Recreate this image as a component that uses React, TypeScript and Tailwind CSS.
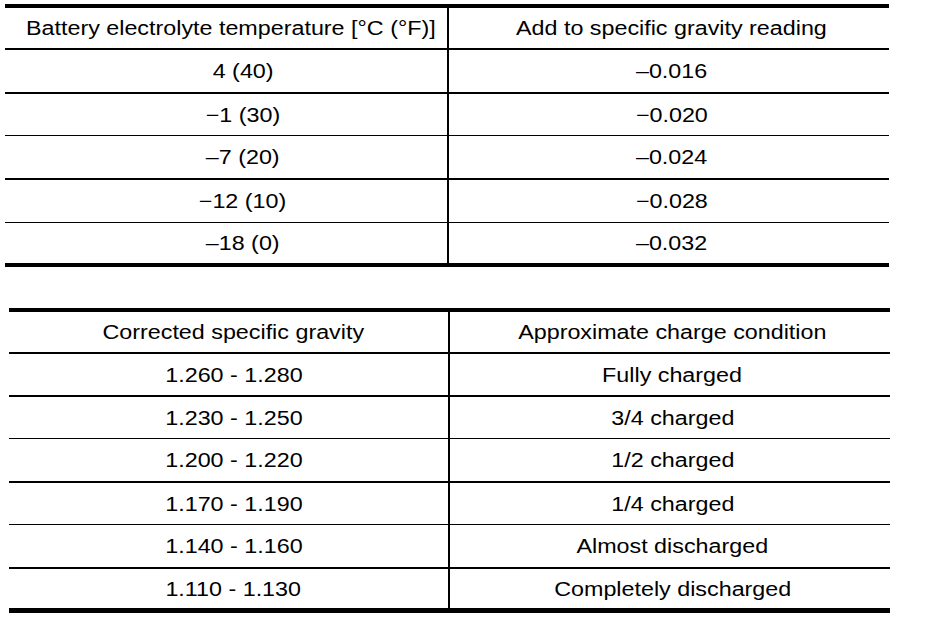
const FONT = "font-['Liberation_Sans',Arial,sans-serif]";

type Row = { left: string; right: string; h: number; line: number };

const tempRows: Row[] = [
  { left: "4 (40)", right: "–0.016", h: 42, line: 2 },
  { left: "−1 (30)", right: "−0.020", h: 41, line: 1 },
  { left: "–7 (20)", right: "–0.024", h: 42, line: 2 },
  { left: "−12 (10)", right: "−0.028", h: 42, line: 1 },
  { left: "–18 (0)", right: "–0.032", h: 40, line: 0 },
];

const gravityRows: Row[] = [
  { left: "1.260 - 1.280", right: "Fully charged", h: 41, line: 2 },
  { left: "1.230 - 1.250", right: "3/4 charged", h: 41, line: 1 },
  { left: "1.200 - 1.220", right: "1/2 charged", h: 42, line: 2 },
  { left: "1.170 - 1.190", right: "1/4 charged", h: 41, line: 1 },
  { left: "1.140 - 1.160", right: "Almost discharged", h: 42, line: 2 },
  { left: "1.110 - 1.130", right: "Completely discharged", h: 39, line: 0 },
];

// the scan is stretched sideways, so glyphs get widened a bit
function Txt({ children }: { children: string }) {
  return <span className="inline-block scale-x-[1.165] whitespace-nowrap">{children}</span>;
}

function Table({
  head,
  rows,
  leftW,
  leftPad,
  headPad,
}: {
  head: [string, string];
  rows: Row[];
  leftW: number;
  leftPad: number;
  headPad: number;
}) {
  return (
    <div className="flex flex-col">
      <div className="flex h-[42px] border-b-2 border-black">
        <div
          className="flex h-[40px] items-center justify-center border-r-2 border-black"
          style={{ width: leftW + 2, paddingLeft: headPad }}
        >
          <Txt>{head[0]}</Txt>
        </div>
        <div className="flex h-[40px] flex-1 items-center justify-center pl-[5px]">
          <Txt>{head[1]}</Txt>
        </div>
      </div>
      {rows.map((r) => (
        <div
          key={r.left}
          className="flex border-black"
          style={{ height: r.h + r.line, borderBottomWidth: r.line }}
        >
          <div
            className="flex items-center justify-center border-r-2 border-black"
            style={{ width: leftW + 2, height: r.h, paddingLeft: leftPad }}
          >
            <Txt>{r.left}</Txt>
          </div>
          <div className="flex flex-1 items-center justify-center pl-[5px]" style={{ height: r.h }}>
            <Txt>{r.right}</Txt>
          </div>
        </div>
      ))}
    </div>
  );
}

export default function App() {
  return (
    <div className={`h-[622px] w-[928px] overflow-hidden bg-white pt-[4px] text-[20px] leading-none text-black ${FONT}`}>
      <div className="ml-[5px] w-[884px] border-y-4 border-black">
        <Table
          head={["Battery electrolyte temperature [°C (°F)]", "Add to specific gravity reading"]}
          rows={tempRows}
          leftW={442}
          leftPad={34}
          headPad={10}
        />
      </div>
      <div className="ml-[9px] mt-[41px] w-[881px] border-t-4 border-b-[5px] border-black">
        <Table
          head={["Corrected specific gravity", "Approximate charge condition"]}
          rows={gravityRows}
          leftW={439}
          leftPad={10}
          headPad={10}
        />
      </div>
    </div>
  );
}
